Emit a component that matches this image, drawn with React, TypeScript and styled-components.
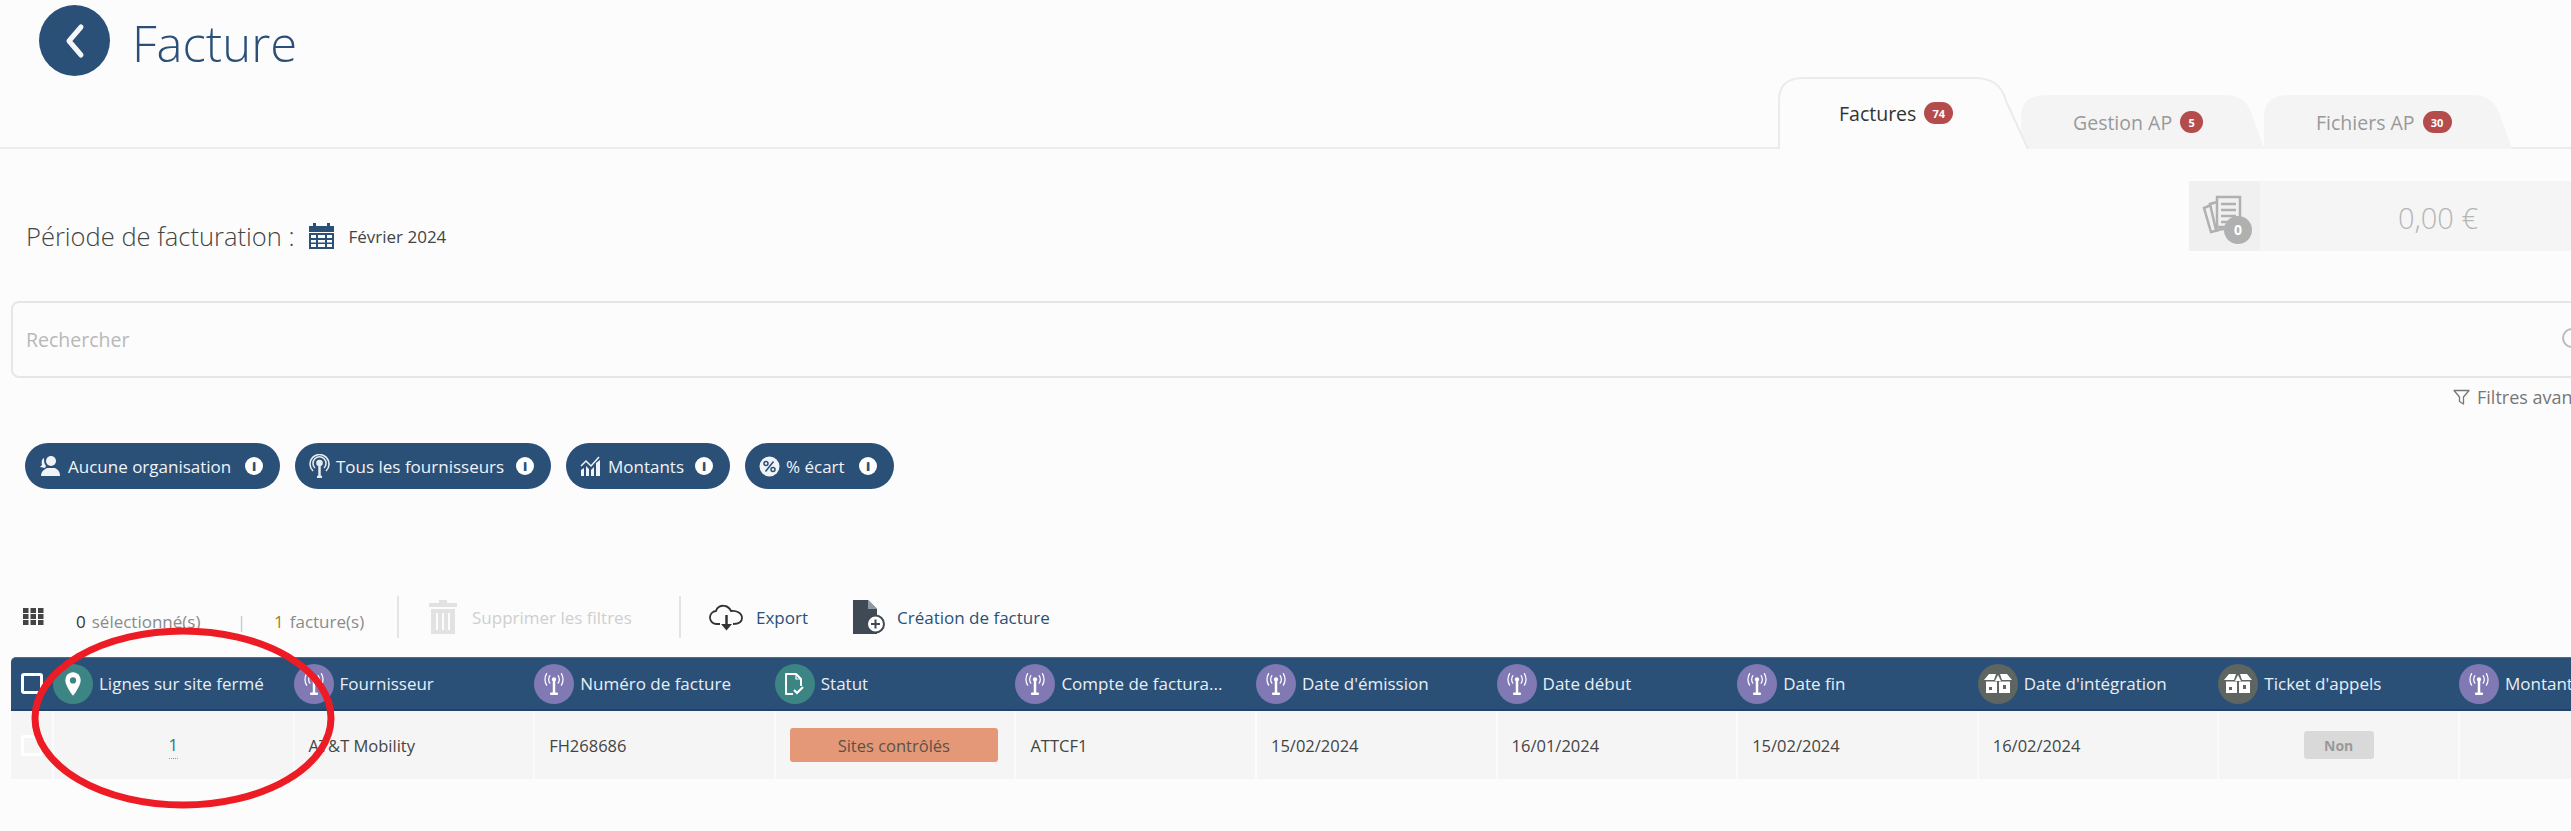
import React from 'react';
import styled, { createGlobalStyle } from 'styled-components';

const NAVY = '#2a5078';

const GlobalStyle = createGlobalStyle`
  html, body {
    margin: 0;
    padding: 0;
    background: #fcfcfc;
    overflow: hidden;
  }
  * { box-sizing: border-box; }
`;

const Page = styled.div`
  position: relative;
  width: 2571px;
  height: 831px;
  overflow: hidden;
  font-family: 'Open Sans', 'Liberation Sans', sans-serif;
  color: #444;
`;

const TopBar = styled.header`
  display: flex;
  justify-content: space-between;
  align-items: flex-end;
  height: 149px;
  padding: 0 59px 0 39px;
  border-bottom: 2px solid #ebebeb;
`;

const TitleGroup = styled.div`
  display: flex;
  align-items: flex-start;
  gap: 22px;
  align-self: flex-start;
  padding-top: 5px;
`;

const BackButton = styled.div`
  display: flex;
  align-items: center;
  justify-content: center;
  width: 71px;
  height: 71px;
  border-radius: 50%;
  background: ${NAVY};
`;

const Title = styled.h1`
  margin: 3px 0 0;
  font-size: 49px;
  font-weight: 300;
  line-height: 71px;
  color: ${NAVY};
`;

const Tabs = styled.nav`
  display: flex;
  align-items: flex-end;
  margin-bottom: -2px;
`;

const Tab = styled.div<{ $width: number; $active?: boolean }>`
  position: relative;
  z-index: ${(p) => (p.$active ? 2 : 1)};
  display: flex;
  align-items: center;
  gap: 8px;
  width: ${(p) => p.$width}px;
  height: ${(p) => (p.$active ? 72 : 54)}px;
  margin-right: ${(p) => (p.$active ? -8 : 0)}px;
  padding-left: ${(p) => (p.$active ? 61 : 52)}px;
  font-size: 19.5px;
  color: ${(p) => (p.$active ? '#333' : '#999')};

  & > svg {
    position: absolute;
    inset: 0;
    width: 100%;
    height: 100%;
    z-index: -1;
  }
`;

const Badge = styled.span<{ $small?: boolean }>`
  display: inline-flex;
  align-items: center;
  justify-content: center;
  width: ${(p) => (p.$small ? 23 : 29)}px;
  height: 22px;
  border-radius: 11px;
  background: #b54c4c;
  color: #fff;
  font-size: 11px;
  font-weight: 700;
`;

const PeriodRow = styled.section`
  display: flex;
  justify-content: space-between;
  align-items: flex-start;
  margin-top: 32px;
  padding-left: 26px;
`;

const PeriodGroup = styled.div`
  display: flex;
  align-items: center;
  padding-top: 40px;
`;

const PeriodLabel = styled.span`
  font-size: 25.5px;
  font-weight: 300;
  line-height: 30px;
  color: #444;
`;

const PeriodValue = styled.span`
  margin-left: 14px;
  font-size: 17px;
  color: #444;
`;

const CalendarBox = styled.span`
  display: flex;
  margin-left: 13px;
`;

const AmountBox = styled.div`
  display: flex;
  width: 382px;
  height: 70px;
  background: #f5f5f5;
`;

const AmountIcon = styled.div`
  display: flex;
  align-items: center;
  justify-content: center;
  width: 71px;
  padding: 7px 0 0 7px;
  background: #f0f0f0;
`;

const AmountValue = styled.div`
  margin-left: 138px;
  font-size: 29px;
  font-weight: 300;
  line-height: 74px;
  color: #b5b5b5;
`;

const SearchBox = styled.div`
  display: flex;
  align-items: center;
  justify-content: space-between;
  width: 2575px;
  height: 77px;
  margin: 50px 0 0 11px;
  padding: 0 0 0 13px;
  border: 2px solid #e6e6e6;
  border-radius: 8px;
  font-size: 19.5px;
  color: #b8b8b8;
`;

const SearchCircle = styled.span`
  width: 20px;
  height: 20px;
  margin-right: 2px;
  margin-top: -4px;
  border: 2px solid #bbb;
  border-radius: 50%;
`;

const FilterLink = styled.div`
  display: flex;
  align-items: center;
  gap: 7px;
  width: 200px;
  height: 24px;
  margin: 7px 0 0 2453px;
  font-size: 18px;
  color: #777;
  white-space: nowrap;

  & > svg {
    flex: none;
  }
`;

const Pills = styled.div`
  display: flex;
  gap: 15px;
  margin: 34px 0 0 25px;
`;

const Pill = styled.div<{ $width: number }>`
  display: flex;
  align-items: center;
  width: ${(p) => p.$width}px;
  height: 46px;
  padding-left: 14px;
  border-radius: 23px;
  background: ${NAVY};
  color: #f0f3f6;
  font-size: 17px;
  white-space: nowrap;
`;

const PillLabel = styled.span`
  flex: 1;
  margin-left: 6px;
`;

const InfoDot = styled.span`
  display: flex;
  align-items: center;
  justify-content: center;
  width: 18px;
  height: 18px;
  margin-right: 17px;
  border-radius: 50%;
  background: #fff;
  color: ${NAVY};
  font-size: 13px;
  font-weight: 800;
  line-height: 1;
`;

const Toolbar = styled.div`
  display: flex;
  align-items: center;
  height: 42px;
  margin: 107px 0 0 23px;
`;

const Counter = styled.span<{ $width: number; $offset?: number }>`
  width: ${(p) => p.$width}px;
  margin-left: ${(p) => p.$offset ?? 0}px;
  padding-top: 8px;
  font-size: 17px;
  color: #8a8a8a;
  white-space: nowrap;
`;

const CountValue = styled.b<{ $tone: string }>`
  margin-right: 6px;
  font-weight: 400;
  color: ${(p) => p.$tone};
`;

const Pipe = styled.span`
  width: 37px;
  padding-top: 8px;
  font-size: 17px;
  font-weight: 300;
  color: #aaa;
`;

const ToolDivider = styled.span`
  width: 2px;
  height: 42px;
  background: #e4e4e4;
`;

const ToolAction = styled.div<{ $disabled?: boolean; $offset?: number; $width?: number }>`
  display: flex;
  align-items: center;
  gap: ${(p) => (p.$disabled ? 15 : 12)}px;
  width: ${(p) => (p.$width ? `${p.$width}px` : 'auto')};
  margin-left: ${(p) => p.$offset ?? 0}px;
  font-size: 17px;
  color: ${(p) => (p.$disabled ? '#cfcfcf' : NAVY)};
  white-space: nowrap;
`;

const Table = styled.div`
  width: 2700px;
  margin: 19px 0 0 11px;
`;

const Columns = `
  display: grid;
  grid-template-columns: 41px repeat(11, 240.6px);
`;

const HeaderRow = styled.div`
  ${Columns}
  height: 54px;
  border-radius: 5px 0 0 0;
  background: ${NAVY};
  border-top: 1px solid #4d7092;
  border-bottom: 2px solid #1f4468;
`;

const HeaderCell = styled.div`
  display: flex;
  align-items: center;
  gap: 6px;
  padding-left: 1px;
  font-size: 17px;
  color: #e9eef3;
  white-space: nowrap;
`;

const CheckCell = styled.div`
  display: flex;
  align-items: center;
  justify-content: center;
`;

const CheckBox = styled.span`
  width: 22px;
  height: 21px;
  margin-left: 1px;
  border: 3px solid #fff;
  border-radius: 3px;
`;

const ColumnIcon = styled.span<{ $tone: string }>`
  display: flex;
  flex: none;
  align-items: center;
  justify-content: center;
  width: 40px;
  height: 40px;
  border-radius: 50%;
  background: ${(p) => p.$tone};
`;

const BodyRow = styled.div`
  ${Columns}
  height: 68px;
  background: #f5f5f5;
`;

const BodyCell = styled.div<{ $center?: boolean }>`
  display: flex;
  align-items: center;
  justify-content: ${(p) => (p.$center ? 'center' : 'flex-start')};
  padding-left: ${(p) => (p.$center ? 0 : 14)}px;
  border-left: 2px solid #fbfbfb;
  font-size: 16.5px;
  color: #444;
`;

const LinkedCount = styled.span`
  padding-bottom: 3px;
  border-bottom: 1px dotted #999;
  color: #2c7480;
  line-height: 20px;
  margin-top: 4px;
`;

const StatusTag = styled.span`
  display: flex;
  align-items: center;
  justify-content: center;
  width: 208px;
  height: 34px;
  border-radius: 3px;
  background: #e59877;
  color: #5c5148;
`;

const OffTag = styled.span`
  display: flex;
  align-items: center;
  justify-content: center;
  width: 70px;
  height: 28px;
  border-radius: 3px;
  background: #d9d9d9;
  color: #999;
  font-size: 14px;
  font-weight: 700;
`;

const Annotation = styled.svg`
  position: absolute;
  left: 28px;
  top: 623px;
  pointer-events: none;
`;

const Antenna = () => (
  <svg width="22" height="23" viewBox="0 0 26 28" fill="none" stroke="#fff">
    <path d="M13 11v15M9.5 26.5h7" strokeWidth="3" strokeLinecap="round" />
    <circle cx="13" cy="9" r="2.6" fill="#fff" stroke="none" />
    <path d="M8 4.5Q5 9 8 13.5M18 4.5Q21 9 18 13.5M4 2Q0 9 4 16M22 2Q26 9 22 16" strokeWidth="1.5" strokeLinecap="round" />
  </svg>
);

const Pin = () => (
  <svg width="18" height="26" viewBox="0 0 20 28">
    <path d="M10 1C5 1 1.500 5 1.500 10c0 6 8.500 17 8.500 17s8.500-11 8.500-17C18.500 5 15 1 10 1z" fill="#fff" />
    <circle cx="10" cy="10" r="3.500" fill="#3d8585" />
  </svg>
);

const StatusDoc = () => (
  <svg width="21" height="24" viewBox="0 0 21 24" fill="none" stroke="#fff" strokeWidth="2">
    <path d="M9 22H2V2h10l5 5v7" strokeLinejoin="round" />
    <path d="M12 2v5h5" strokeWidth="1.200" />
    <path d="M10 18l3 3 6-6" strokeWidth="2.200" />
  </svg>
);

const OpenBox = () => (
  <svg width="28" height="19" viewBox="0 0 28 19" fill="#fff">
    <path d="M5 0h7l-2 6H0zM16 0h7l5 6H18zM14 1l3 6h-6z" />
    <path d="M2 7.500h11V19H2zM15 7.500h11V19H15z" />
    <rect x="5" y="13" width="3" height="3" fill="#5f6560" />
    <rect x="19" y="11" width="3" height="4" fill="#5f6560" />
  </svg>
);

const Calendar = () => (
  <svg width="27" height="26" viewBox="0 0 27 26" fill={NAVY}>
    <path d="M1 3h25v6H1z" />
    <rect x="5" y="0" width="3" height="5" />
    <rect x="19" y="0" width="3" height="5" />
    <path fillRule="evenodd" d="M1 10h25v16H1zM3 12v3h5v-3zm7 0v3h7v-3zm9 0v3h5v-3zM3 17v2.500h5V17zm7 0v2.500h7V17zm9 0v2.500h5V17zM3 21v3h5v-3zm7 0v3h7v-3zm9 0v3h5v-3z" />
  </svg>
);

const Bills = () => (
  <svg width="52" height="50" viewBox="0 0 52 50">
    <g fill="none" stroke="#b0b0b0" strokeWidth="2.500">
      <path d="M9 10L2 13l7 24 8-2" />
      <path d="M15 7L8 9l6 26 8-1" />
      <path d="M15 2h23v30H15z" fill="#f0f0f0" />
      <path d="M19 9h15M19 15h15M19 21h15M19 27h8" />
    </g>
    <circle cx="36" cy="35" r="14" fill="#b0b0b0" />
    <text x="36" y="40" fontSize="14" fontWeight="700" fill="#fff" textAnchor="middle" fontFamily="Open Sans">0</text>
  </svg>
);

const Person = () => (
  <svg width="23" height="22" viewBox="0 0 21 22" fill="#f0f3f6">
    <circle cx="11" cy="6" r="5" />
    <path d="M1 21c0-5 4-7 6-8h8c2 1 5 3 5 8z" />
    <path d="M4 3c-2 1-3 4-2 7l-2 2 5 1 1-2C4 9 4 6 4 3z" />
  </svg>
);

const Signal = () => (
  <svg width="21" height="24" viewBox="0 0 21 24" fill="none" stroke="#e6ebf0" strokeWidth="1.600">
    <path d="M10.500 10v13M8 23h5" strokeWidth="2.500" />
    <circle cx="10.500" cy="9" r="2.500" fill="#e6ebf0" />
    <path d="M6 14a6.500 6.500 0 1 1 9 0M4 17a9.500 9.500 0 1 1 13 0" />
  </svg>
);

const Chart = () => (
  <svg width="22" height="22" viewBox="0 0 22 22" fill="#f0f3f6">
    <path d="M1 21v-6l3-2v8zM6 21V11l3 3v7zM11 21v-6l3-3v9zM16 21V8l4-3v16z" />
    <path d="M1 11l5-5 5 5 8-9" fill="none" stroke="#f0f3f6" strokeWidth="1.500" />
  </svg>
);

const Percent = () => (
  <svg width="21" height="21" viewBox="0 0 21 21">
    <circle cx="10.500" cy="10.500" r="10" fill="#f0f3f6" />
    <circle cx="7" cy="7.500" r="2" fill="none" stroke={NAVY} strokeWidth="1.500" />
    <circle cx="14" cy="13.500" r="2" fill="none" stroke={NAVY} strokeWidth="1.500" />
    <path d="M14.500 5.500l-8 10" stroke={NAVY} strokeWidth="1.500" />
  </svg>
);

const GridIcon = () => (
  <svg width="21" height="18" viewBox="0 0 21 18" fill="#444">
    {[0, 6, 12].map((y) =>
      [0, 7.500, 15].map((x) => <rect key={`${x}-${y}`} x={x} y={y} width="5.500" height="5" />),
    )}
  </svg>
);

const Trash = () => (
  <svg width="28" height="34" viewBox="0 0 28 34" fill="#e2e2e2">
    <path d="M10 0h8v3h10v4H0V3h10z" />
    <path fillRule="evenodd" d="M2 9h24v25H2zM7 13v17h2V13zm6 0v17h2V13zm6 0v17h2V13z" />
  </svg>
);

const CloudDownload = () => (
  <svg width="35" height="27" viewBox="0 0 35 27" fill="none" stroke="#333" strokeWidth="1.800">
    <path d="M11 20H8a6.500 6.500 0 0 1-1-13c1-4 5-6 9-5 3 .5 5 3 6 5 5-1 11 2 11 7s-4 6-9 6" />
    <path d="M17.500 11v12" strokeWidth="2.500" />
    <path d="M12 20h11l-5.500 6.500z" fill="#333" stroke="none" />
  </svg>
);

const AddDoc = () => (
  <svg width="33" height="34" viewBox="0 0 33 34">
    <path d="M1 0h15l9 9v25H1z" fill="#3f4a55" />
    <path d="M16 0v9h9" fill="#8c98a5" />
    <circle cx="23.500" cy="24" r="8.500" fill="#fff" stroke="#3f4a55" strokeWidth="2" />
    <path d="M23.500 19.500v9M19 24h9" stroke="#3f4a55" strokeWidth="2" />
  </svg>
);

const FunnelIcon = () => (
  <svg width="17" height="17" viewBox="0 0 17 17" fill="none" stroke="#777" strokeWidth="1.300">
    <path d="M1 1.500h15L10.500 8v7l-4-2.500V8z" strokeLinejoin="round" />
  </svg>
);

const ActiveTabShape = () => (
  <svg viewBox="0 0 251 72" preserveAspectRatio="none">
    <path d="M1 72V24C1 8 9 1 25 1H196C214 1 224 8 228 24L250 72Z" fill="#fcfcfc" />
    <path d="M1 72V24C1 8 9 1 25 1H196C214 1 224 8 228 24L250 72" fill="none" stroke="#ebebeb" strokeWidth="2" />
  </svg>
);

const IdleTabShape = () => (
  <svg viewBox="0 0 248 54" preserveAspectRatio="none">
    <path d="M0 54V22C0 8 8 0 26 0H208C224 0 232 8 236 20L248 54Z" fill="#f4f4f4" />
  </svg>
);

type Column = { label: string; tone: string; icon: React.ReactNode };

const TEAL = '#3d8585';
const VIOLET = '#8079b3';
const SLATE = '#5f6560';

const columns: Column[] = [
  { label: 'Lignes sur site fermé', tone: TEAL, icon: <Pin /> },
  { label: 'Fournisseur', tone: VIOLET, icon: <Antenna /> },
  { label: 'Numéro de facture', tone: VIOLET, icon: <Antenna /> },
  { label: 'Statut', tone: TEAL, icon: <StatusDoc /> },
  { label: 'Compte de factura...', tone: VIOLET, icon: <Antenna /> },
  { label: "Date d'émission", tone: VIOLET, icon: <Antenna /> },
  { label: 'Date début', tone: VIOLET, icon: <Antenna /> },
  { label: 'Date fin', tone: VIOLET, icon: <Antenna /> },
  { label: "Date d'intégration", tone: SLATE, icon: <OpenBox /> },
  { label: "Ticket d'appels", tone: SLATE, icon: <OpenBox /> },
  { label: 'Montant', tone: VIOLET, icon: <Antenna /> },
];

const App = () => {
  return (
    <Page>
      <GlobalStyle />
      <TopBar>
        <TitleGroup>
          <BackButton>
            <svg width="24" height="36" viewBox="0 0 24 36" fill="none" stroke="#f4f6f8" strokeWidth="5" strokeLinecap="round" strokeLinejoin="round">
              <path d="M18 4L6 18l12 14" />
            </svg>
          </BackButton>
          <Title>Facture</Title>
        </TitleGroup>
        <Tabs>
          <Tab $active $width={251}>
            <ActiveTabShape />
            Factures <Badge>74</Badge>
          </Tab>
          <Tab $width={243}>
            <IdleTabShape />
            Gestion AP <Badge $small>5</Badge>
          </Tab>
          <Tab $width={248}>
            <IdleTabShape />
            Fichiers AP <Badge>30</Badge>
          </Tab>
        </Tabs>
      </TopBar>

      <PeriodRow>
        <PeriodGroup>
          <PeriodLabel>Période de facturation :</PeriodLabel>
          <CalendarBox>
            <Calendar />
          </CalendarBox>
          <PeriodValue>Février 2024</PeriodValue>
        </PeriodGroup>
        <AmountBox>
          <AmountIcon>
            <Bills />
          </AmountIcon>
          <AmountValue>0,00 €</AmountValue>
        </AmountBox>
      </PeriodRow>

      <SearchBox>
        Rechercher
        <SearchCircle />
      </SearchBox>
      <FilterLink>
        <FunnelIcon />
        Filtres avancés
      </FilterLink>

      <Pills>
        <Pill $width={255}>
          <Person />
          <PillLabel>Aucune organisation</PillLabel>
          <InfoDot>i</InfoDot>
        </Pill>
        <Pill $width={256}>
          <Signal />
          <PillLabel>Tous les fournisseurs</PillLabel>
          <InfoDot>i</InfoDot>
        </Pill>
        <Pill $width={164}>
          <Chart />
          <PillLabel>Montants</PillLabel>
          <InfoDot>i</InfoDot>
        </Pill>
        <Pill $width={149}>
          <Percent />
          <PillLabel>% écart</PillLabel>
          <InfoDot>i</InfoDot>
        </Pill>
      </Pills>

      <Toolbar>
        <GridIcon />
        <Counter $width={161} $offset={32}>
          <CountValue $tone="#333">0</CountValue>sélectionné(s)
        </Counter>
        <Pipe>|</Pipe>
        <Counter $width={123}>
          <CountValue $tone="#a67c2d">1</CountValue>facture(s)
        </Counter>
        <ToolDivider />
        <ToolAction $disabled $offset={30} $width={250}>
          <Trash />
          Supprimer les filtres
        </ToolAction>
        <ToolDivider />
        <ToolAction $offset={28} $width={143}>
          <CloudDownload />
          Export
        </ToolAction>
        <ToolAction>
          <AddDoc />
          Création de facture
        </ToolAction>
      </Toolbar>

      <Table>
        <HeaderRow>
          <CheckCell>
            <CheckBox />
          </CheckCell>
          {columns.map((c) => (
            <HeaderCell key={c.label}>
              <ColumnIcon $tone={c.tone}>{c.icon}</ColumnIcon>
              {c.label}
            </HeaderCell>
          ))}
        </HeaderRow>
        <BodyRow>
          <CheckCell>
            <CheckBox />
          </CheckCell>
          <BodyCell $center>
            <LinkedCount>1</LinkedCount>
          </BodyCell>
          <BodyCell>AT&amp;T Mobility</BodyCell>
          <BodyCell>FH268686</BodyCell>
          <BodyCell>
            <StatusTag>Sites contrôlés</StatusTag>
          </BodyCell>
          <BodyCell>ATTCF1</BodyCell>
          <BodyCell>15/02/2024</BodyCell>
          <BodyCell>16/01/2024</BodyCell>
          <BodyCell>15/02/2024</BodyCell>
          <BodyCell>16/02/2024</BodyCell>
          <BodyCell $center>
            <OffTag>Non</OffTag>
          </BodyCell>
          <BodyCell />
        </BodyRow>
      </Table>

      <Annotation width="312" height="190" viewBox="0 0 312 190" fill="none">
        <ellipse cx="155" cy="95" rx="148" ry="87" stroke="#ed1c24" strokeWidth="7" />
      </Annotation>
    </Page>
  );
};

export default App;
